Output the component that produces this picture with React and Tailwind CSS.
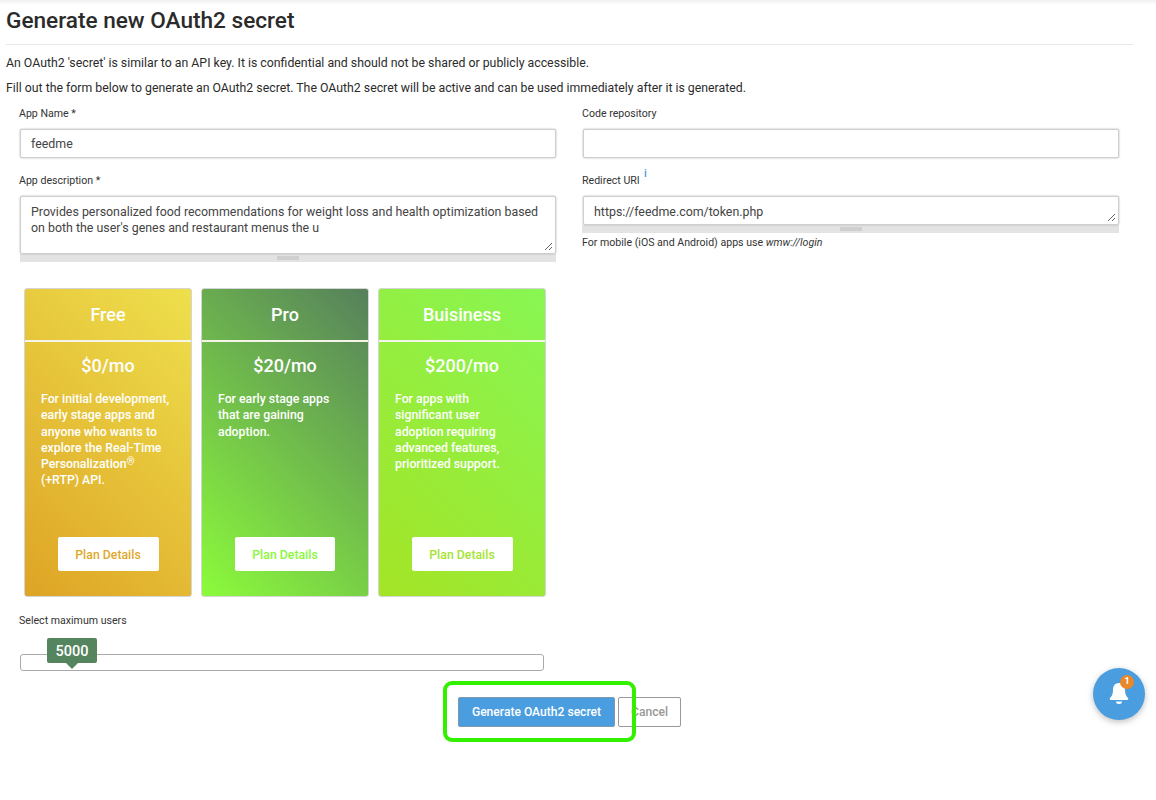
import React from "react";

const font = { fontFamily: "Roboto, sans-serif" };

const plans = [
  {
    name: "Free",
    price: "$0/mo",
    gradient: "bg-[linear-gradient(45deg,#dea425,#eee04d)]",
    accent: "text-[#e0a82a]",
    buttonWidth: "w-[101px]",
    text: (
      <>
        For initial development, early stage apps and anyone who wants to explore the Real-Time Personalization
        <span className="text-[10px] leading-none align-[3px]">®</span>
        <br />
        (+RTP) API.
      </>
    ),
  },
  {
    name: "Pro",
    price: "$20/mo",
    gradient: "bg-[linear-gradient(45deg,#8cfb3b,#56805c)]",
    accent: "text-[#8cf83c]",
    buttonWidth: "w-[100px]",
    text: "For early stage apps that are gaining adoption.",
  },
  {
    name: "Buisiness",
    price: "$200/mo",
    gradient: "bg-[linear-gradient(45deg,#a4e426,#88f653)]",
    accent: "text-[#a6e332]",
    buttonWidth: "w-[101px]",
    text: "For apps with significant user adoption requiring advanced features, prioritized support.",
  },
];

const ScrollBar = () => (
  <div className="h-[8px] bg-[#e3e3e3] flex justify-center items-center">
    <div className="w-[22px] h-[4px] bg-[#cfcfcf]" />
  </div>
);

const Grip = () => (
  <svg width="9" height="9" viewBox="0 0 9 9" className="absolute right-[2px] bottom-[2px]">
    <path d="M1 8 8 1M5 8 8 5" stroke="#666" strokeWidth="1" fill="none" />
  </svg>
);

const Label = ({ children, className = "" }) => (
  <div className={`text-[10.6px] leading-[14px] text-[#333] ${className}`}>{children}</div>
);

const Box = ({ className = "", children }) => (
  <div className={`relative ml-[1px] border border-[#cfcfcf] rounded-[2px] bg-white text-[12.4px] text-[#444] px-[10px] shadow-[0_0_2px_#aaa] ${className}`}>
    {children}
  </div>
);

const PlanCard = ({ plan }) => (
  <div className={`w-[168px] h-[309px] rounded-[3px] border border-[#d5d5d5] text-white flex flex-col ${plan.gradient}`}>
    <div className="h-[53px] shrink-0 pb-[1px] border-b-2 border-[#f4f4e8] flex items-center justify-center text-[18px] font-medium">
      {plan.name}
    </div>
    <div className="mt-[12px] text-center text-[18px] leading-[24px] font-medium">{plan.price}</div>
    <div className="mt-[13px] px-[16px] text-[12.3px] leading-[16.3px] font-medium h-[118px]">{plan.text}</div>
    <div className="mt-[28px] flex justify-center">
      <div className={`h-[34px] pt-[2px] rounded-[2px] bg-white flex items-center justify-center text-[12.3px] font-medium ${plan.buttonWidth} ${plan.accent}`}>
        Plan Details
      </div>
    </div>
  </div>
);

export default function App() {
  return (
    <div style={font} className="relative w-[1156px] h-[800px] overflow-hidden bg-white">
      <div className="h-[5px] bg-gradient-to-b from-[#f0f0f0] to-white" />
      <div className="pl-[6px] pr-[23px]">
        <h1 className="h-[40px] text-[22.6px] leading-[32px] font-medium text-[#2b2b2b] border-b border-[#e8e8e8]">
          Generate new OAuth2 secret
        </h1>
        <p className="mt-[9px] text-[12.3px] leading-[18px] text-[#2b2b2b]">
          An OAuth2 'secret' is similar to an API key. It is confidential and should not be shared or publicly accessible.
        </p>
        <p className="mt-[7px] text-[12.3px] leading-[18px] text-[#2b2b2b]">
          Fill out the form below to generate an OAuth2 secret. The OAuth2 secret will be active and can be used immediately after it is generated.
        </p>
      </div>

      <div className="mt-[10px] pl-[19px] flex gap-[26px]">
        <div className="w-[537px]">
          <Label>App Name *</Label>
          <Box className="mt-[8px] h-[29px] pt-[1px] flex items-center">feedme</Box>
          <Label className="mt-[16px]">App description *</Label>
          <Box className="mt-[8px] h-[58px] pt-[7px] leading-[16px]">
            Provides personalized food recommendations for weight loss and health optimization based on both the user's genes and restaurant menus the u
            <Grip />
          </Box>
          <div className="ml-[1px]">
            <ScrollBar />
          </div>

          <div className="mt-[26px] ml-[5px] flex gap-[9px]">
            {plans.map((plan) => (
              <PlanCard key={plan.name} plan={plan} />
            ))}
          </div>

          <Label className="mt-[17px]">Select maximum users</Label>
          <div className="relative mt-[26px] ml-[1px] w-[524px] h-[17px] rounded-[3px] border border-[#aaa] bg-white">
            <div className="absolute left-[26px] top-[-17px] w-[50px] h-[25px] pt-[3px] rounded-[2px] bg-[#55855f] text-white text-[14.5px] font-medium flex items-center justify-center">
              5000
              <div className="absolute left-[19px] top-[25px] border-x-[6px] border-x-transparent border-t-[6px] border-t-[#55855f]" />
            </div>
          </div>
        </div>

        <div className="w-[537px]">
          <Label>Code repository</Label>
          <Box className="mt-[8px] h-[29px] ml-0" />
          <Label className="mt-[16px] relative">
            Redirect URI
            <span className="absolute left-[62px] top-[-7px] text-[11px] font-medium text-[#4a9bdf]">i</span>
          </Label>
          <Box className="mt-[8px] h-[29px] pt-[3px] ml-0 flex items-center">
            https://feedme.com/token.php
            <Grip />
          </Box>
          <ScrollBar />
          <div className="mt-[3px] text-[10.6px] leading-[14px] text-[#333]">
            For mobile (iOS and Android) apps use <i>wmw://login</i>
          </div>
        </div>
      </div>

      <div className="mt-[26px] ml-[458px] flex gap-[3px]">
        <div className="w-[157px] h-[30px] rounded-[2px] border border-[#7f97a8] bg-[#4a9ddf] text-white text-[12.1px] font-medium flex items-center justify-center">
          Generate OAuth2 secret
        </div>
        <div className="w-[63px] h-[30px] rounded-[2px] border border-[#999] bg-white text-[#999] text-[12.1px] font-medium flex items-center justify-center">
          Cancel
        </div>
      </div>

      {/* highlight drawn over the screenshot */}
      <div className="absolute left-[443px] top-[681px] w-[193px] h-[61px] rounded-[9px] border-[4px] border-[#33f000]" />

      <div className="absolute left-[1093px] top-[668px] w-[52px] h-[52px] rounded-full bg-[#4a9ddf] shadow-[0_2px_6px_rgba(0,0,0,0.25)] flex items-center justify-center">
        <svg width="22" height="24" viewBox="0 0 22 24" className="mt-[-2px]">
          <path d="M11 2c-3.600 0-6 2.800-6 6.500 0 4.500-1 6.500-3 8.500-.7.800-.2 2 1 2h16c1.200 0 1.700-1.200 1-2-2-2-3-4-3-8.500C17 4.800 14.600 2 11 2Z" fill="#fff" />
          <path d="M8 20.500h6a3 2.500 0 0 1-6 0Z" fill="#fff" />
        </svg>
        <div className="absolute left-[27px] top-[7px] w-[14px] h-[14px] rounded-full bg-[#e9872b] text-white text-[9px] font-bold flex items-center justify-center">
          1
        </div>
      </div>
    </div>
  );
}
